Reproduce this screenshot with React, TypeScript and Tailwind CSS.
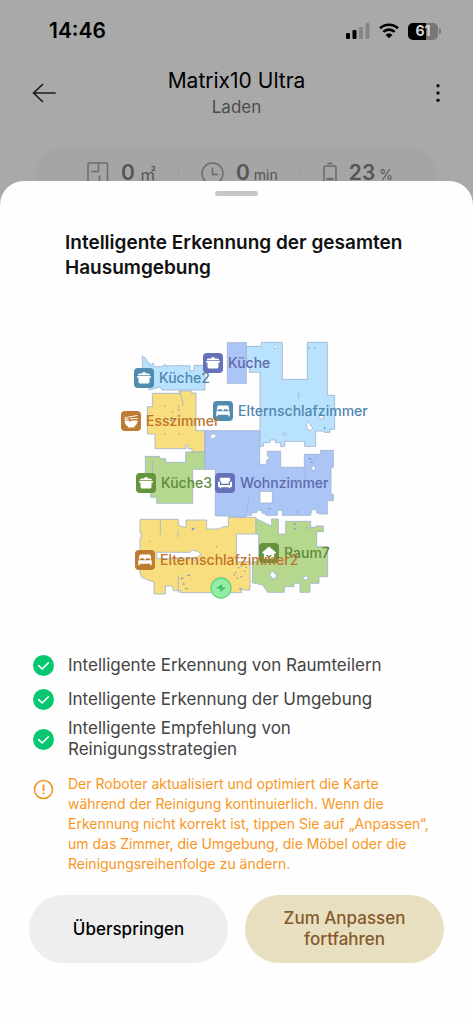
import clsx from 'clsx';
import type { ReactNode } from 'react';

const PotIcon = () => (
  <svg viewBox="0 0 20 20" fill="#fff" className="size-full">
    <path d="M8.4 4.2h3.2v1.2h2.6c1.2 0 1.9.7 1.9 1.8H3.9c0-1.1.7-1.8 1.9-1.8h2.6z" />
    <path d="M3 8h14v1.6h-1.5v4.1c0 1.1-.7 1.8-1.8 1.8H6.300c-1.100 0-1.800-.7-1.800-1.800V9.600H3z" />
  </svg>
);

const BedIcon = () => (
  <svg viewBox="0 0 20 20" fill="#fff" className="size-full">
    <path d="M6 4.5h8c1 0 1.6.5 1.7 1.4l.5 3.6h-1.4c0-.8-.4-1.2-1.2-1.2h-1.5c-.8 0-1.2.4-1.2 1.2H9.1c0-.8-.4-1.2-1.2-1.2H6.4c-.8 0-1.2.4-1.2 1.2H3.8l.5-3.6c.1-.9.7-1.4 1.7-1.4z" />
    <path d="M3.3 10.3h13.4v5h-1.5v-1.6H4.8v1.6H3.3z" />
  </svg>
);

const BowlIcon = () => (
  <svg viewBox="0 0 20 20" fill="#fff" className="size-full">
    <path d="M3.5 6.3 16.5 4v1L3.5 6.9z" />
    <path d="M3.5 7.6h4v1.2h-4zM8.800 7.300l7.700-.4v1.200l-7.700.2z" />
    <path d="M3.6 9.5h4.2L9 11l1.3-1.5h6.2c0 3-1.4 4.9-3.3 5.9v1H6.9v-1c-2-1-3.3-2.9-3.3-5.9z" />
  </svg>
);

const SofaIcon = () => (
  <svg viewBox="0 0 20 20" fill="#fff" className="size-full">
    <path d="M6.4 4.8h7.2c1 0 1.6.6 1.6 1.5v1.4c-.9.2-1.4.8-1.4 1.7v1.3H6.2V9.4c0-.9-.5-1.5-1.4-1.7V6.3c0-.9.6-1.5 1.6-1.5z" />
    <path d="M3 9.7c0-.7.4-1.1 1-1.1s1 .4 1 1.1v2.2h10V9.7c0-.7.4-1.1 1-1.1s1 .4 1 1.1v3.2c0 .8-.5 1.3-1.3 1.3h-.6v1h-1.3v-1H6.2v1H4.9v-1h-.6c-.8 0-1.3-.5-1.3-1.3z" />
  </svg>
);

const HomeIcon = () => (
  <svg viewBox="0 0 20 20" className="size-full">
    <path
      d="M10 3.6 17 9.5l-.7 1h-1.2v4.4c0 .7-.3 1-1 1H5.9c-.7 0-1-.3-1-1v-4.4H3.7l-.7-1z"
      fill="#fff"
    />
    <path
      d="M7.8 12.2c.6 1 1.3 1.3 2.2 1.3s1.6-.3 2.2-1.3"
      fill="none"
      stroke="#64953c"
      strokeWidth="1.3"
    />
  </svg>
);

interface Room {
  id: number;
  name: string;
  icon: ReactNode;
  position: string;
  badge: string;
  text: string;
}

const rooms: Room[] = [
  {
    id: 1,
    name: 'Küche',
    icon: <PotIcon />,
    position: 'left-[85px] top-[15px]',
    badge: 'bg-[#6672b8]',
    text: 'text-[#6069ac]',
  },
  {
    id: 2,
    name: 'Küche2',
    icon: <PotIcon />,
    position: 'left-[16px] top-[30px]',
    badge: 'bg-[#508bb0]',
    text: 'text-[#4f87ae]',
  },
  {
    id: 3,
    name: 'Elternschlafzimmer',
    icon: <BedIcon />,
    position: 'left-[95px] top-[63px]',
    badge: 'bg-[#508bb0]',
    text: 'text-[#4f87ae]',
  },
  {
    id: 4,
    name: 'Esszimmer',
    icon: <BowlIcon />,
    position: 'left-[3px] top-[73px]',
    badge: 'bg-[#bd7b33]',
    text: 'text-[#bd722d]',
  },
  {
    id: 5,
    name: 'Küche3',
    icon: <PotIcon />,
    position: 'left-[18px] top-[135px]',
    badge: 'bg-[#64953c]',
    text: 'text-[#5f8a3c]',
  },
  {
    id: 6,
    name: 'Wohnzimmer',
    icon: <SofaIcon />,
    position: 'left-[97px] top-[135px]',
    badge: 'bg-[#6672b8]',
    text: 'text-[#6069ac]',
  },
  {
    id: 7,
    name: 'Raum7',
    icon: <HomeIcon />,
    position: 'left-[141px] top-[205px]',
    badge: 'bg-[#64953c]',
    text: 'text-[#5f8a3c]',
  },
  {
    id: 8,
    name: 'Elternschlafzimmer2',
    icon: <BedIcon />,
    position: 'left-[17px] top-[212px]',
    badge: 'bg-[#bd7b33]',
    text: 'text-[#bd722d]',
  },
];

const features = [
  'Intelligente Erkennung von Raumteilern',
  'Intelligente Erkennung der Umgebung',
  'Intelligente Empfehlung von Reinigungsstrategien',
];

const StatusBar = () => (
  <div className="flex h-[62px] items-center justify-between pl-[49px] pr-[32px]">
    <span className="text-[21px] font-semibold text-black">14:46</span>
    <div className="flex items-center gap-[9px]">
      <svg width="24" height="16" viewBox="0 0 24 16">
        <rect x="0" y="10" width="4" height="6" rx="1.2" />
        <rect x="6.5" y="7" width="4" height="9" rx="1.2" />
        <rect x="13" y="4" width="4" height="12" rx="1.2" fill="#868686" />
        <rect x="19.5" y="0" width="4" height="16" rx="1.2" fill="#868686" />
      </svg>
      <svg width="20" height="16" viewBox="0 0 20 16">
        <g fill="none" stroke="#000" strokeWidth="2.6">
          <path d="M1 5.3a13 13 0 0 1 18 0" />
          <path d="M4.3 8.9a8.3 8.3 0 0 1 11.4 0" />
        </g>
        <path d="M6.6 11.9a5 5 0 0 1 6.8 0L10 15.3z" />
      </svg>
      <div className="flex items-center gap-px">
        <div className="flex h-[17px] w-[30px] items-center justify-center rounded-[5px] bg-linear-to-r from-black from-61% to-[#777] to-61% text-sm font-bold text-[#d5d5d5]">
          61
        </div>
        <div className="h-[6px] w-[2px] rounded-r-full bg-[#777]" />
      </div>
    </div>
  </div>
);

const Header = () => (
  <header className="flex h-[62px] items-center justify-between px-[32px]">
    <button type="button" aria-label="Zurück" className="w-[24px]">
      <svg
        width="24"
        height="20"
        viewBox="0 0 24 20"
        fill="none"
        stroke="#1c1c1c"
        strokeWidth="1.7"
        strokeLinecap="round"
        strokeLinejoin="round"
      >
        <path d="M10.5 1.5 1.5 10l9 8.5M1.5 10H23" />
      </svg>
    </button>
    <div className="text-center">
      <h1 className="text-[21px] leading-[28px] text-black">Matrix10 Ultra</h1>
      <p className="text-[17px] leading-[24px] text-[#4c4c4c]">Laden</p>
    </div>
    <button
      type="button"
      aria-label="Mehr"
      className="flex w-[24px] justify-end pr-[1px]"
    >
      <svg width="4" height="20" viewBox="0 0 4 20" fill="#111">
        <circle cx="2" cy="2.7" r="1.7" />
        <circle cx="2" cy="10" r="1.7" />
        <circle cx="2" cy="17.3" r="1.7" />
      </svg>
    </button>
  </header>
);

const StatsBar = () => (
  <div className="mx-[36px] mt-[23px] flex h-[52px] items-center justify-between rounded-[26px] bg-[#a5a5a5] pl-[51px] pr-[44px] text-[#555]">
    <div className="flex items-center gap-[12px]">
      <svg
        width="22"
        height="22"
        viewBox="0 0 22 22"
        fill="none"
        stroke="#6c6c70"
        strokeWidth="1.5"
      >
        <rect x="1" y="1" width="19.5" height="19.5" rx="1" />
        <path d="M11.5 1v8.5H4.5M12.5 21v-7.5" />
      </svg>
      <div className="flex items-center gap-[5px]">
        <span className="text-[21px] font-semibold leading-[26px]">0</span>
        <span className="font-['Noto_Sans_CJK_JP',sans-serif] text-base leading-[26px]">
          ㎡
        </span>
      </div>
    </div>
    <div className="h-[6px] w-px bg-[#999]" />
    <div className="flex items-center gap-[12px]">
      <svg
        width="23"
        height="23"
        viewBox="0 0 23 23"
        fill="none"
        stroke="#6c6c70"
        strokeWidth="1.5"
      >
        <circle cx="11.5" cy="11.5" r="10.5" />
        <path d="M11.5 5.5v7h5.5" />
      </svg>
      <div className="flex items-baseline gap-[4px]">
        <span className="text-[21px] font-semibold leading-[26px]">0</span>
        <span className="text-sm">min</span>
      </div>
    </div>
    <div className="h-[6px] w-px bg-[#999]" />
    <div className="flex items-center gap-[12px]">
      <svg
        width="14"
        height="22"
        viewBox="0 0 14 22"
        fill="none"
        stroke="#6c6c70"
        strokeWidth="1.6"
      >
        <path d="M4.5 1.5h5" />
        <rect x="1" y="4" width="12" height="16" rx="1.5" />
        <path d="M3.5 17h7" strokeWidth="2.4" />
      </svg>
      <div className="flex items-baseline gap-[4px]">
        <span className="text-[21px] font-semibold leading-[26px]">23</span>
        <span className="text-sm">%</span>
      </div>
    </div>
  </div>
);

const FloorPlan = () => (
  <svg
    viewBox="24 24 711 792"
    className="size-full"
    stroke="#9fb3cf"
    strokeWidth="2.5"
    aria-hidden="true"
  >
    <g fill="#b8e2fe">
      <path d="M97 78l11 7 2 10 8 3v8l12-6 2 10h26l2-5h10v5l8-3h62v15h12v-16h33v74H156l-6-9-32 9-10-20-11-10z" />
      <path d="M409 49H454V37H517V148H592V37H652V196H674V298H660V307H642V303H617V349H584V334H524V349H512V338H496V330H480V338H460V349H450V127H418V110H409Z" />
    </g>
    <g fill="#abc5f7">
      <path d="M352 38H409V160H352Z" />
      <path d="M284 302H449V403H470V390L480 384L472 378V364H512V412H583V373H632V361H670V412H663V493H670V512H652V552H630L620 548L618 537L605 540L602 556H517V541H502V556H467L465 550H457L455 541H442L440 548H425V556H408V562H358V558H316V418H284Z" />
    </g>
    <g fill="#f8de7e">
      <path d="M127 190H210L207 183H245V189H258V302H284V366H246V356H234V345H228V356H135V312H112V230H127Z" />
      <path d="M90 568H205V583L212 589L228 592V570H290V597H325L340 590H355V562H438V612H379V695H420V780H400L395 775V788H212V782H190L187 768H166V792H132V757L95 742L90 730V622H94V610H90Z" />
    </g>
    <g fill="#b6d88e">
      <path d="M106 379H148V386H167V397H227V366H284V418H248V520H140V502H122V470H106Z" />
      <path d="M438 566L485 588V567H505V612H527V574H602V592H618V588H640V605H620V650H653V740H627V760H600V787H570V760H552V770H523V787H473L458 765L427 758V695H446V612H438Z" />
    </g>
    {/* walls and obstacles left out of the cleaned area */}
    <g fill="#fff">
      <path d="M450 484H487V519H450Z" />
      <path d="M302 312h16v8l-8 6h-8z" />
      <path d="M140 667H240L245 660L262 664L275 674L262 680L256 690H246V686H140Z" />
      <path d="M590 283l8-8 5 13 6 6-8 8-10-6z" />
      <path d="M491 48l6-4 5 6-4 6-6-2z" />
      <path d="M630 252l8 4 4 8-9 4-6-8z" />
      <path d="M520 310h8v6h-8z" />
      <path d="M603 411l10-4 4 10-8 6z" />
      <path d="M482 728l8-5 4 8 8-1-5 8 3 8-10-2-8 4 2-8-5-5z" />
      <path d="M580 738l7 2 7-4-1 7 5 5-8-1-3 6-4-6-7-1 5-4z" />
    </g>
    <g fill="none">
      <path d="M208 181l6 20 6 25M151 570v45M204 598v24M205 735v53M127 392v60M417 506l-8 45M615 390l6-15M586 414v36M566 187v18" />
      <path
        d="M163 228h3M205 228h3M186 246h3M182 262h3M208 240h-4M163 312h3M206 312h3M180 271h8M118 634h3M318 650h3M245 597h8M248 593v8M212 745h8M218 762h6M232 736h8M225 776h8M594 54h4M612 54h4M644 290v8M596 387h8M602 396h6M474 536h6M484 536h2M560 546h4M552 582h6M588 594h4M552 596h6M375 728h4M384 713h4M392 740h5M402 724h4M380 745h4M371 735h4M392 708h4M406 712h4M388 777h6"
        stroke="#7f9ac4"
        strokeWidth="4"
      />
    </g>
    <circle cx="333" cy="774" r="30" fill="#93eea3" stroke="#5fd584" strokeWidth="4" />
    <path
      d="M337 762L318 774L331 777L329 787L349 773L336 771Z"
      fill="#4dbf74"
      stroke="none"
    />
  </svg>
);

const RoomPin = ({ room }: { room: Room }) => (
  <div className={clsx('absolute flex items-center gap-[5px]', room.position)}>
    <span className={clsx('size-[20px] rounded-[4px]', room.badge)}>
      {room.icon}
    </span>
    <span className={clsx('text-sm leading-[20px] font-medium', room.text)}>
      {room.name}
    </span>
  </div>
);

const CheckBadge = () => (
  <svg width="21" height="21" viewBox="0 0 21 21" className="shrink-0">
    <circle cx="10.5" cy="10.5" r="10.5" fill="#07c771" />
    <path
      d="m5.7 10.7 3.5 3.3 6.2-6.2"
      fill="none"
      stroke="#fff"
      strokeWidth="1.6"
      strokeLinecap="round"
      strokeLinejoin="round"
    />
  </svg>
);

const App = () => {
  return (
    <div className="flex min-h-screen flex-col bg-[#a9a9a9] font-[Inter,sans-serif]">
      <StatusBar />
      <Header />
      <StatsBar />
      <main className="relative -mt-[18px] flex flex-1 flex-col rounded-t-[24px] bg-[#fefefe] pt-[10px]">
        <div className="mx-auto h-[5px] w-[43px] rounded-full bg-[#c6c6c6]" />
        <h2 className="mx-[65px] mt-[34px] text-[19px] leading-[25px] font-semibold text-[#111]">
          Intelligente Erkennung der gesamten Hausumgebung
        </h2>

        <div className="relative mx-auto mt-[58px] h-[264px] w-[237px]">
          <FloorPlan />
          {rooms.map((room) => (
            <RoomPin key={room.id} room={room} />
          ))}
        </div>

        <ul className="mt-[46px] px-[33px]">
          {features.map((feature) => (
            <li
              key={feature}
              className="flex min-h-[34px] items-center gap-[14px] py-[2px] text-[17px] leading-[21px] text-[#444]"
            >
              <CheckBadge />
              <span>{feature}</span>
            </li>
          ))}
        </ul>

        <div className="mt-[12px] flex gap-[14px] pl-[33px] pr-[42px] text-[#f8971d]">
          <svg
            width="21"
            height="21"
            viewBox="0 0 21 21"
            fill="none"
            stroke="#ef9322"
            strokeWidth="1.5"
            className="mt-[5px] shrink-0"
          >
            <circle cx="10.5" cy="10.5" r="9" />
            <path d="M10.5 5.5v6.5M10.5 13.5v1.7" strokeWidth="1.8" />
          </svg>
          <p className="text-sm leading-[20px]">
            Der Roboter aktualisiert und optimiert die Karte während der
            Reinigung kontinuierlich. Wenn die Erkennung nicht korrekt ist,
            tippen Sie auf „Anpassen“, um das Zimmer, die Umgebung, die Möbel
            oder die Reinigungsreihenfolge zu ändern.
          </p>
        </div>

        <div className="mt-[21px] grid grid-cols-2 gap-[17px] px-[29px] pb-[61px] text-[17px] leading-[21px] font-medium">
          <button
            type="button"
            className="h-[68px] rounded-full bg-[#eee] px-[30px] text-black"
          >
            Überspringen
          </button>
          <button
            type="button"
            className="h-[68px] rounded-full bg-[#e8dec0] px-[30px] text-[#85592a]"
          >
            Zum Anpassen fortfahren
          </button>
        </div>
      </main>
    </div>
  );
};

export default App;
